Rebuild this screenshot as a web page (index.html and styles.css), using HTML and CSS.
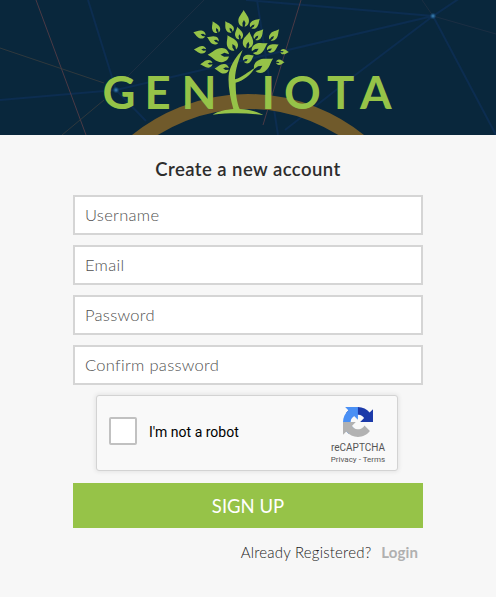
FILE: index.html
```
<!DOCTYPE html>
<html lang="en">
<head>
<meta charset="utf-8">
<title>Genyiota - Sign up</title>
<link rel="stylesheet" href="styles.css">
</head>
<body>
<header class="banner">
<svg class="banner-art" viewBox="0 0 496 135" width="496" height="135" role="img" aria-label="Genyiota">
  <defs>
    <path id="leaf" d="M0-25C5-14 17-6 17 8C17 17 11 23 3 25L6 14L1 5L-4 14L-3 25C-11 23-17 17-17 8C-17-6-5-14 0-25Z"/>
    <radialGradient id="glow"><stop offset="0" stop-color="#4385b5"/><stop offset=".4" stop-color="#225d8b"/><stop offset="1" stop-color="#123d68" stop-opacity="0"/></radialGradient>
  </defs>
  <g fill="none" stroke="#0c2d50" stroke-width="2">
    <path d="M0 100L116 90L232 63L433 16L460 -2M88 0L116 90L146 121M246 0L433 16L496 135M433 16L354 76L285 130M257 0L278 135"/>
  </g>
  <g fill="none" stroke-width=".8">
    <path stroke="#5c3f47" d="M36 0L86 135M301 0L263 125"/>
    <path stroke="#3a3e3e" d="M0 48L104 83M62 135L104 100"/>
    <path stroke="#293446" stroke-width=".6" d="M124 80L204 0M422 0L433 16L496 34"/>
  </g>
  <circle cx="116" cy="90" r="3.500" fill="url(#glow)"/>
  <circle cx="433" cy="16" r="3.500" fill="url(#glow)"/>
  <circle cx="248" cy="278.500" r="177" fill="none" stroke="#705a2b" stroke-width="15"/>
  <text class="wordmark" y="109" x="102.500 144.500 181.500 261.500 284 327 360">GENIOTA</text>
  <g fill="#96c348" transform="translate(180) scale(.33333)">
    <use href="#leaf" transform="translate(191 55) scale(.94 1)"/>
    <use href="#leaf" transform="translate(106 81) rotate(-25) scale(.7 .76)"/>
    <use href="#leaf" transform="translate(146 80) rotate(-32) scale(.7 .78)"/>
    <use href="#leaf" transform="translate(226 70) rotate(45) scale(.68 .76)"/>
    <use href="#leaf" transform="translate(58 102) rotate(-73) scale(.7 .76)"/>
    <use href="#leaf" transform="translate(98 119) rotate(-66) scale(.7 .76)"/>
    <use href="#leaf" transform="translate(176 99) rotate(-12) scale(.7 .78)"/>
    <use href="#leaf" transform="translate(154 128) rotate(-28) scale(.95 1)"/>
    <use href="#leaf" transform="translate(205 120) rotate(8) scale(.92 1)"/>
    <use href="#leaf" transform="translate(237 103) rotate(40) scale(.68 .8)"/>
    <use href="#leaf" transform="translate(284 104) rotate(40) scale(.68 .84)"/>
    <use href="#leaf" transform="translate(240 143) rotate(60) scale(.95 1.06)"/>
    <use href="#leaf" transform="translate(279 143) rotate(60) scale(.68 .78)"/>
    <use href="#leaf" transform="translate(314 155) rotate(93) scale(.48 .5)"/>
    <use href="#leaf" transform="translate(60 149) rotate(-88) scale(.68 .74)"/>
    <use href="#leaf" transform="translate(115 165) rotate(-88) scale(1.24 1.28)"/>
    <use href="#leaf" transform="translate(79 192) rotate(-93) scale(.68 .74)"/>
    <use href="#leaf" transform="translate(125 206) rotate(-88) scale(.84 .86)"/>
    <use href="#leaf" transform="translate(206 175) rotate(62) scale(.74 .7)"/>
    <use href="#leaf" transform="translate(252 193) rotate(58) scale(1.15 1.3)"/>
    <use href="#leaf" transform="translate(301 187) rotate(90) scale(.48 .5)"/>
    <path d="M188 150C177 177 166 206 165 238C187 231 205 215 225 203C212 224 192 241 167 248C167 278 170 307 179 327C204 328 232 334 250 345C198 338 149 338 98 344C114 333 139 329 160 327C150 292 142 248 147 218C154 190 170 167 188 150Z"/>
  </g>
</svg>
</header>
<main class="panel">
  <h1 class="title">Create a new account</h1>
  <form class="form">
    <input class="field" type="text" placeholder="Username" aria-label="Username">
    <input class="field" type="email" placeholder="Email" aria-label="Email">
    <input class="field" type="password" placeholder="Password" aria-label="Password">
    <input class="field" type="password" placeholder="Confirm password" aria-label="Confirm password">
    <div class="captcha">
      <span class="checkbox"></span>
      <span class="captcha-label">I'm not a robot</span>
      <div class="brand">
        <svg width="30" height="30" viewBox="0 0 64 64" aria-hidden="true">
          <path fill="#1c3aa9" d="M64 31.955l-.033-1.37V4.687l-7.16 7.16C50.948 4.674 42.033.093 32.05.093c-10.389 0-19.622 4.96-25.458 12.64l11.736 11.86a15.55 15.55 0 0 1 4.754-5.334c2.05-1.6 4.952-2.906 8.968-2.906.485 0 .86.057 1.135.163 4.976.393 9.288 3.14 11.828 7.124l-8.307 8.307 27.295-.02"/>
          <path fill="#4a90f5" d="M31.862.094l-1.37.033H4.594l7.16 7.16C4.58 13.147 0 22.06 0 32.046c0 10.389 4.96 19.622 12.64 25.458L24.5 45.768a15.55 15.55 0 0 1-5.334-4.754c-1.6-2.05-2.906-4.952-2.906-8.968 0-.485.057-.86.163-1.135.393-4.976 3.14-9.288 7.124-11.828l8.307 8.307L31.862.094"/>
          <path fill="#b2b2b2" d="M.001 32.045l.033 1.37v25.898l7.16-7.16c5.86 7.173 14.774 11.754 24.76 11.754 10.389 0 19.622-4.96 25.458-12.64l-11.736-11.86a15.55 15.55 0 0 1-4.754 5.334c-2.05 1.6-4.952 2.906-8.968 2.906-.485 0-.86-.057-1.135-.163-4.976-.393-9.288-3.14-11.828-7.124l8.307-8.307c-10.522.041-22.4.066-27.295-.005"/>
        </svg>
        <span class="brand-name">reCAPTCHA</span>
        <span class="brand-links">Privacy - Terms</span>
      </div>
    </div>
    <button class="submit" type="button">SIGN UP</button>
    <p class="login"><span class="question">Already Registered?</span><a class="link">Login</a></p>
  </form>
</main>
</body>
</html>
```
FILE: styles.css
```
* { box-sizing: border-box; }
body {
  margin: 0;
  background: #f7f7f7;
  color: #2d2d2d;
  font-family: Lato, sans-serif;
}
.banner { height: 135px; background: #09273c; }
.banner-art { display: block; }
.wordmark { fill: #96c348; font: 700 45.5px Lato, sans-serif; }
.panel { height: 462px; padding-top: 22px; }
.title {
  margin: 0;
  font-size: 18.5px;
  line-height: 24px;
  font-weight: 600;
  text-align: center;
  letter-spacing: .45px;
}
.form {
  display: flex;
  flex-direction: column;
  width: 350px;
  margin: 14px auto 0;
  gap: 10px;
}
.field {
  height: 40px;
  padding: 1px 10px;
  border: 2px solid #d5d5d5;
  border-radius: 0;
  background: #fff;
  font: 300 16.5px Lato, sans-serif;
  letter-spacing: .3px;
}
.field::placeholder { color: #505050; opacity: 1; }
.captcha {
  display: flex;
  align-items: center;
  width: 302px;
  height: 76px;
  margin-left: 23px;
  padding: 0 7px 0 12px;
  border: 1px solid #d3d3d3;
  border-radius: 3px;
  background: #f9f9f9;
  box-shadow: 0 0 4px 1px rgba(0, 0, 0, .08);
  font-family: Roboto, sans-serif;
}
.checkbox {
  width: 28px;
  height: 28px;
  margin-bottom: 4px;
  border: 2px solid #c1c1c1;
  border-radius: 2px;
  background: #fff;
}
.captcha-label {
  margin: 0 0 2px 12px;
  color: #000;
  font-size: 14px;
}
.brand {
  display: flex;
  flex-direction: column;
  align-items: center;
  width: 64px;
  margin: 7px 0 0 auto;
  color: #555;
}
.brand-name { margin-top: 4px; font-size: 10px; line-height: 13px; }
.brand-links { font-size: 8px; line-height: 12px; }
.submit {
  height: 45px;
  margin-top: 2px;
  padding: 0;
  border: 0;
  background: #96c348;
  color: #fff;
  font: 400 18.5px Lato, sans-serif;
}
.login {
  display: flex;
  justify-content: flex-end;
  gap: 10px;
  margin: 5px 5px 0 0;
  font-size: 15px;
  line-height: 18px;
}
.question { color: #222; font-weight: 300; letter-spacing: .2px; }
.link { color: #b0b0b0; font-weight: 700; letter-spacing: .1px; }
```
